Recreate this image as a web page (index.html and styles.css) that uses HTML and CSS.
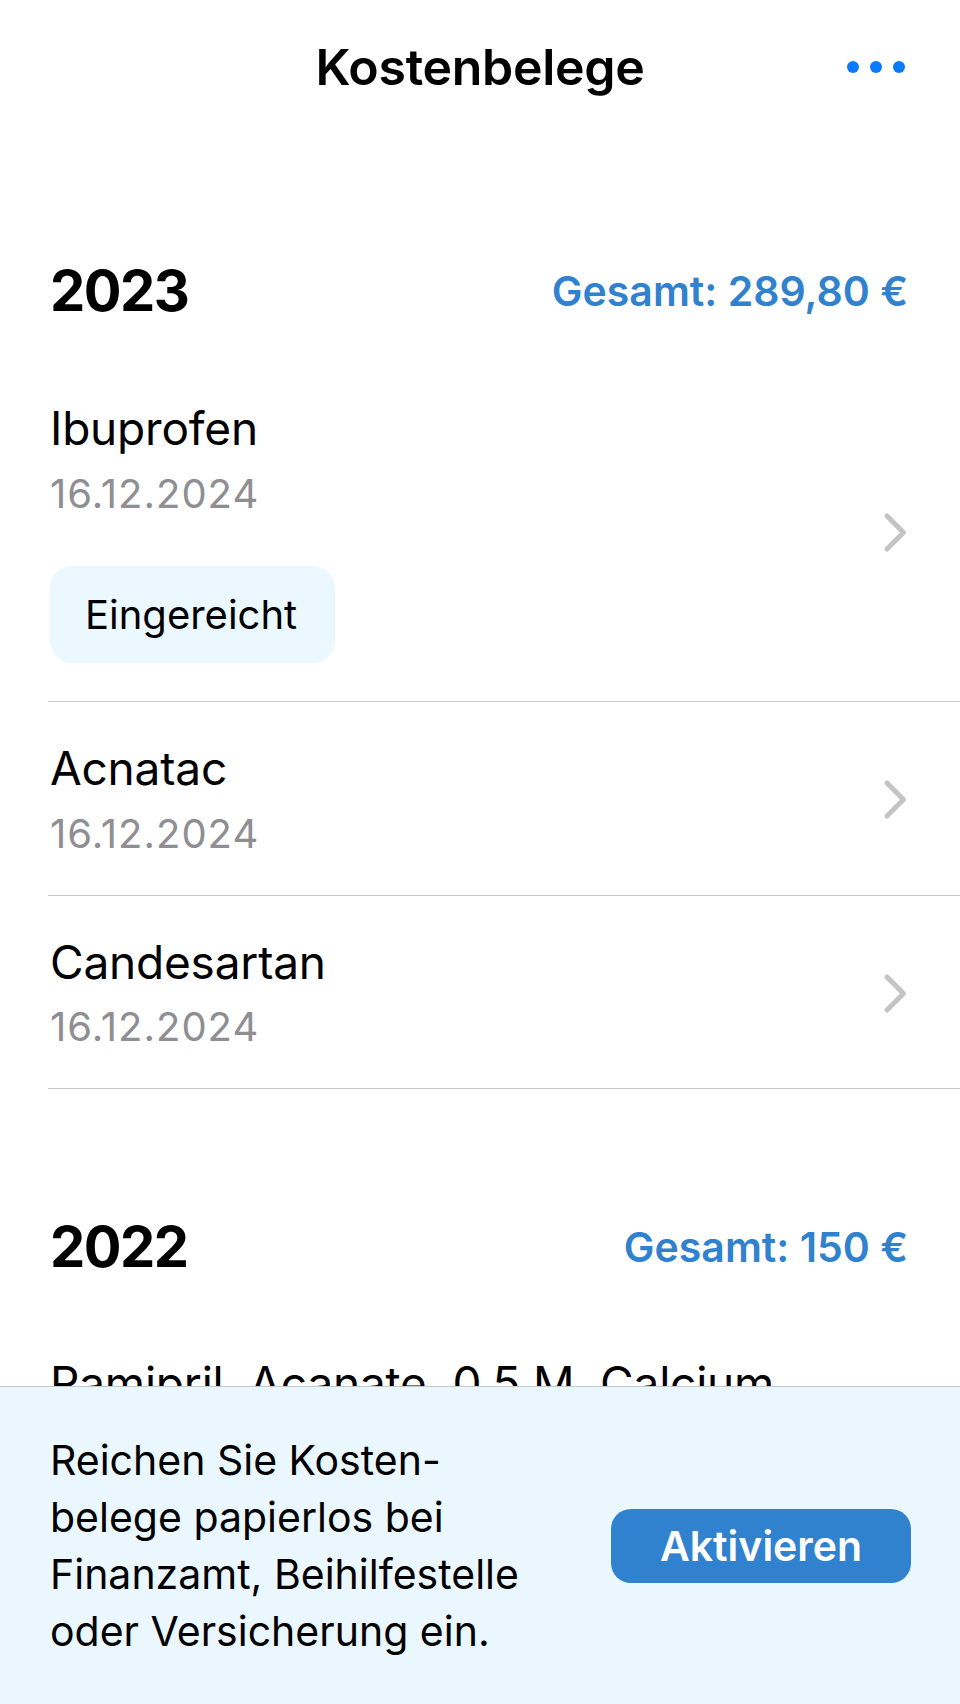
FILE: index.html
```html
<!DOCTYPE html>
<html lang="de">
<head>
<meta charset="utf-8">
<title>Kostenbelege</title>
<link rel="stylesheet" href="styles.css">
</head>
<body>
<header class="navbar">
  <div class="nav-side"></div>
  <h1 class="nav-title">Kostenbelege</h1>
  <div class="nav-side nav-right">
    <button class="more-btn" aria-label="Mehr">
      <span class="dot"></span><span class="dot"></span><span class="dot"></span>
    </button>
  </div>
</header>

<main>
  <section class="section">
    <div class="section-header">
      <h2 class="year">2023</h2>
      <span class="total">Gesamt: 289,80 €</span>
    </div>
    <ul class="list">
      <li class="row">
        <div class="row-main">
          <div class="row-name">Ibuprofen</div>
          <div class="row-date">16.12.2024</div>
          <span class="badge">Eingereicht</span>
        </div>
        <svg class="chevron" viewBox="0 0 25 41" width="25" height="41"><path d="M4 4 L20.5 20.5 L4 37" fill="none" stroke="#c4c4c7" stroke-width="5" stroke-linecap="round" stroke-linejoin="round"/></svg>
      </li>
      <li class="row">
        <div class="row-main">
          <div class="row-name">Acnatac</div>
          <div class="row-date">16.12.2024</div>
        </div>
        <svg class="chevron" viewBox="0 0 25 41" width="25" height="41"><path d="M4 4 L20.5 20.5 L4 37" fill="none" stroke="#c4c4c7" stroke-width="5" stroke-linecap="round" stroke-linejoin="round"/></svg>
      </li>
      <li class="row">
        <div class="row-main">
          <div class="row-name">Candesartan</div>
          <div class="row-date">16.12.2024</div>
        </div>
        <svg class="chevron" viewBox="0 0 25 41" width="25" height="41"><path d="M4 4 L20.5 20.5 L4 37" fill="none" stroke="#c4c4c7" stroke-width="5" stroke-linecap="round" stroke-linejoin="round"/></svg>
      </li>
    </ul>
  </section>

  <section class="section">
    <div class="section-header">
      <h2 class="year">2022</h2>
      <span class="total">Gesamt: 150 €</span>
    </div>
    <ul class="list">
      <li class="row">
        <div class="row-main">
          <div class="row-name">Ramipril, Acanate, 0,5 M, Calcium Sandoz</div>
          <div class="row-date">16.12.2024</div>
        </div>
        <svg class="chevron" viewBox="0 0 25 41" width="25" height="41"><path d="M4 4 L20.5 20.5 L4 37" fill="none" stroke="#c4c4c7" stroke-width="5" stroke-linecap="round" stroke-linejoin="round"/></svg>
      </li>
    </ul>
  </section>
</main>

<aside class="banner">
  <p class="banner-text">Reichen Sie Kosten-<br>belege papierlos bei<br>Finanzamt, Beihilfestelle<br>oder Versicherung ein.</p>
  <button class="banner-btn">Aktivieren</button>
</aside>
</body>
</html>
```

FILE: styles.css
```css
* {
  box-sizing: border-box;
}

html, body {
  margin: 0;
  padding: 0;
  background: #ffffff;
}

body {
  font-family: "Inter", "Noto Sans", "Liberation Sans", sans-serif;
  color: #000000;
  width: 960px;
  min-height: 1704px;
}

/* Navigation bar */
.navbar {
  display: grid;
  grid-template-columns: 1fr auto 1fr;
  align-items: center;
  height: 134px;
}

.nav-title {
  margin: 0;
  font-size: 50px;
  font-weight: 600;
  letter-spacing: -0.3px;
  line-height: 1.2;
}

.nav-right {
  display: flex;
  justify-content: flex-end;
  padding-right: 55px;
}

.more-btn {
  display: flex;
  align-items: center;
  gap: 11px;
  padding: 0;
  border: 0;
  background: transparent;
  height: 20px;
}

.dot {
  width: 12px;
  height: 12px;
  border-radius: 50%;
  background: #0a7aff;
}

/* Sections */
.section {
  padding-top: 88px;
}

.section-header {
  display: flex;
  justify-content: space-between;
  align-items: center;
  height: 140px;
  padding: 0 52px 0 50px;
}

.year {
  margin: 0;
  font-size: 56px;
  font-weight: 700;
  letter-spacing: -1.5px;
  line-height: 1.2;
}

.total {
  font-size: 41px;
  font-weight: 600;
  color: #3182ce;
  line-height: 1.2;
}

.list {
  list-style: none;
  margin: 0 0 0 48px;
  padding: 0;
}

.row {
  display: flex;
  align-items: center;
  padding: 40px 52px 38px 2px;
  border-bottom: 1px solid #c8c8cc;
}

.row-main {
  flex: 1;
  min-width: 0;
  padding-right: 40px;
}

.row-name {
  font-size: 46px;
  line-height: 1.17;
  font-weight: 400;
  letter-spacing: -0.2px;
}

.row-date {
  margin-top: 15px;
  font-size: 40px;
  letter-spacing: 1px;
  line-height: 1.15;
  color: #8e8e93;
}

.badge {
  display: inline-flex;
  align-items: center;
  height: 97px;
  margin-top: 49px;
  padding: 0 38px 0 35px;
  border-radius: 22px;
  background: #ebf8ff;
  font-size: 40px;
  color: #000000;
}

.chevron {
  flex: none;
  display: block;
}

/* Bottom banner (overlays the list) */
.banner {
  position: fixed;
  left: 0;
  right: 0;
  bottom: 0;
  height: 318px;
  display: flex;
  align-items: center;
  justify-content: space-between;
  padding: 0 49px 0 50px;
  background: #ebf7fe;
  border-top: 1px solid #c3c9cf;
}

.banner-text {
  margin: 0;
  font-size: 41px;
  line-height: 57px;
  color: #000000;
}

.banner-btn {
  width: 300px;
  height: 74px;
  border: 0;
  border-radius: 20px;
  background: #3182ce;
  color: #ffffff;
  font-family: inherit;
  font-size: 41px;
  font-weight: 600;
  padding: 0;
}
```
